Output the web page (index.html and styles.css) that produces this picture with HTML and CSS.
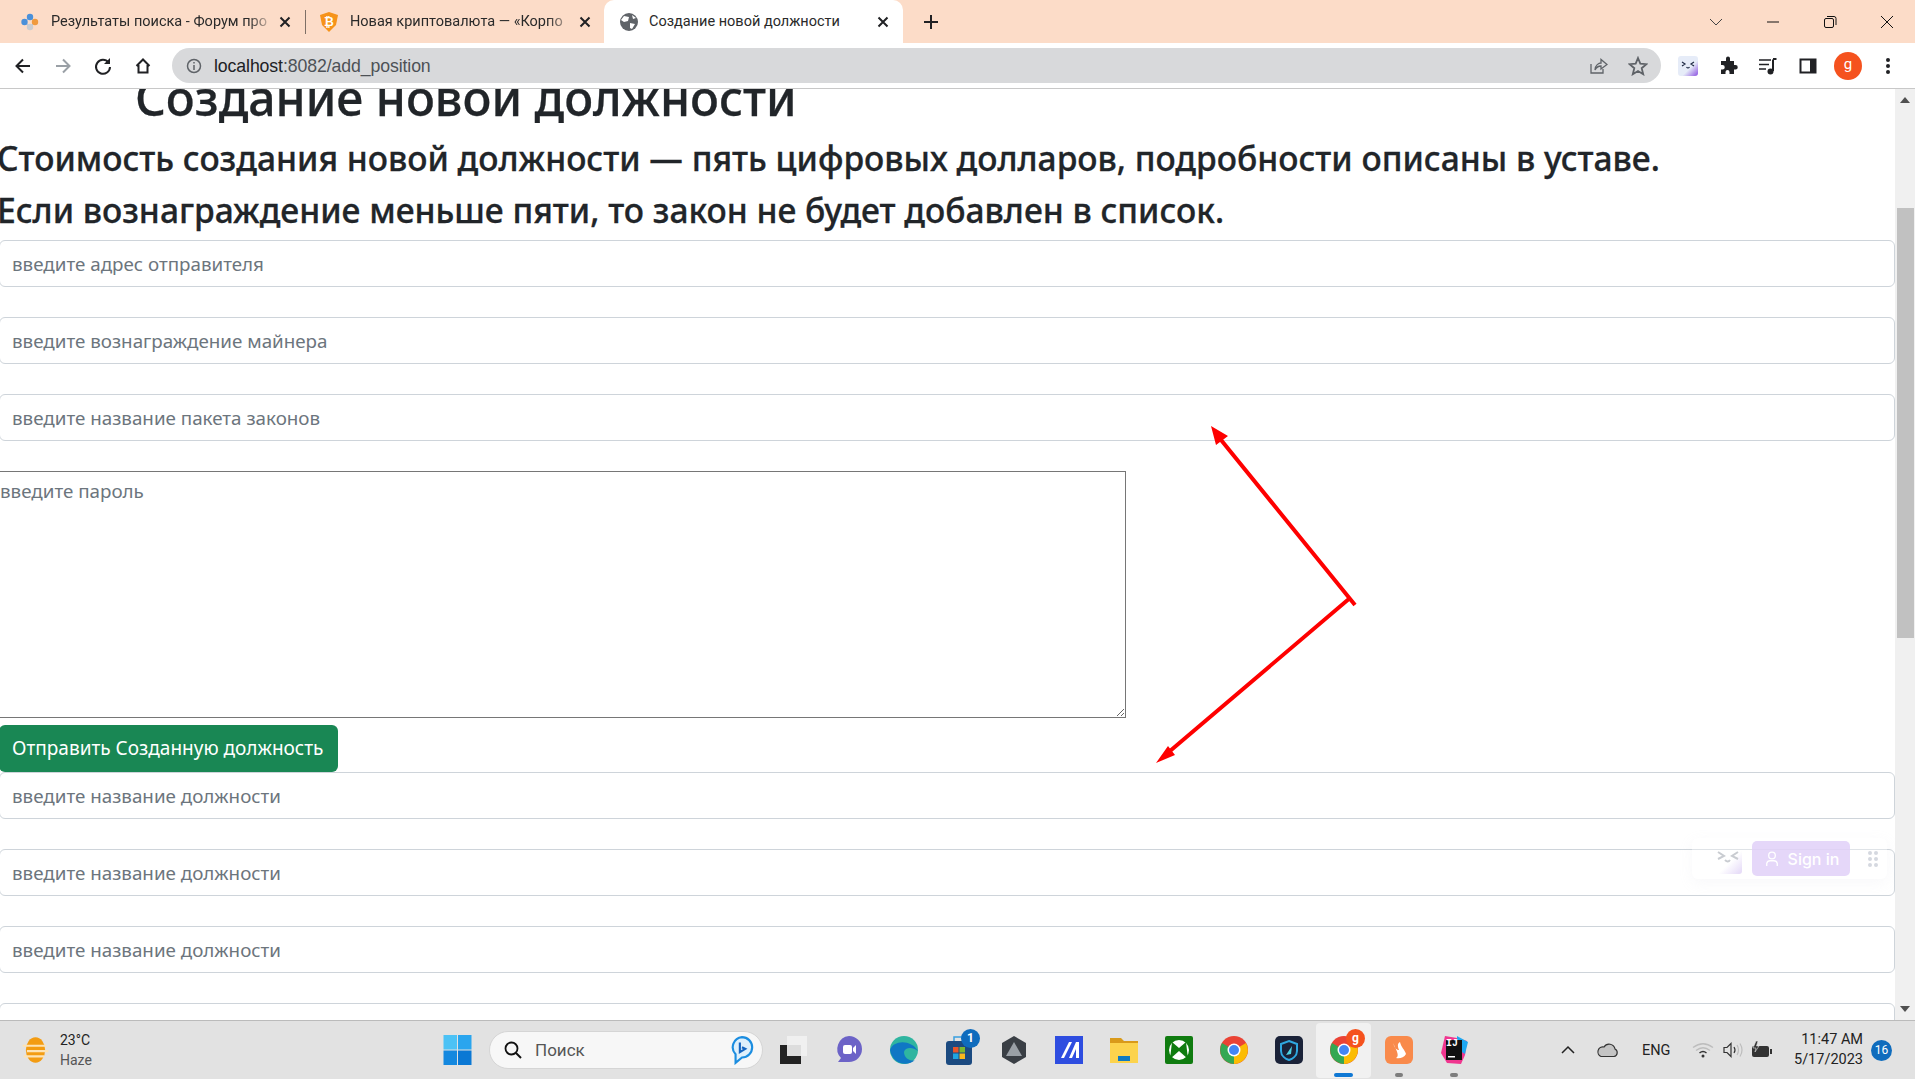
FILE: index.html
```html
<!DOCTYPE html>
<html lang="ru">
<head>
<meta charset="utf-8">
<title>Создание новой должности</title>
<link rel="stylesheet" href="styles.css">
</head>
<body>
<div class="win">
  <div class="tabbar">
    <div class="tab t1">
      <svg class="fav" viewBox="0 0 20 20"><path d="M10 5L4.500 10L10 15L15 10Z" fill="none" stroke="#9cc3ea" stroke-width="1"/><circle cx="10" cy="5" r="3.200" fill="#4a90d9"/><circle cx="4.500" cy="10" r="3.200" fill="#4a90d9"/><circle cx="15" cy="10" r="3.200" fill="#f09a3e"/><circle cx="10" cy="15" r="3.200" fill="#c9ccd1"/></svg>
      <span class="tt">Результаты поиска - Форум про</span><svg class="x" viewBox="0 0 12 12"><path d="M1.500 1.500L10.500 10.500M10.500 1.500L1.500 10.500" stroke="#202124" stroke-width="2"/></svg>
    </div>
    <div class="sep"></div>
    <div class="tab t2">
      <svg class="fav" viewBox="0 0 20 20"><path d="M10 0 L19 3 L17 13 L10 20 L3 13 L1 3Z" fill="#f6931a"/><text x="10" y="14" class="btc">₿</text></svg>
      <span class="tt">Новая криптовалюта — «Корпо</span><svg class="x" viewBox="0 0 12 12"><path d="M1.500 1.500L10.500 10.500M10.500 1.500L1.500 10.500" stroke="#202124" stroke-width="2"/></svg>
    </div>
    <div class="tab active">
      <svg class="fav" viewBox="0 0 20 20"><circle cx="10" cy="10" r="9" fill="#5f6368"/><path d="M5 4 L10 5 L9 9 L5 10 L2 8Z M11 11 L16 12 L13 17 L11 16Z M13 3 L17 6 L14 7Z" fill="#fff"/></svg>
      <span class="tt">Создание новой должности</span><svg class="x" viewBox="0 0 12 12"><path d="M1.500 1.500L10.500 10.500M10.500 1.500L1.500 10.500" stroke="#202124" stroke-width="2"/></svg>
    </div>
    <svg class="plus" viewBox="0 0 14 14"><path d="M7 0V14M0 7H14" stroke="#202124" stroke-width="2"/></svg>
    <div class="winctl">
      <svg viewBox="0 0 16 16" class="wc"><path d="M2 5L8 11L14 5" fill="none" stroke="#444" stroke-width="1"/></svg>
      <svg viewBox="0 0 16 16" class="wc"><path d="M2 8H14" stroke="#111" stroke-width="1"/></svg>
      <svg viewBox="0 0 16 16" class="wc"><rect x="2.500" y="4.500" width="9" height="9" rx="1.500" fill="none" stroke="#111"/><path d="M5 2.500H12A2 2 0 0 1 14 4.500V11" fill="none" stroke="#111"/></svg>
      <svg viewBox="0 0 16 16" class="wc"><path d="M2 2L14 14M14 2L2 14" stroke="#111" stroke-width="1"/></svg>
    </div>
  </div>
  <div class="toolbar">
    <div class="navs">
      <svg viewBox="0 0 20 20" class="nav"><path d="M17 10H4M10 3.500L3.500 10L10 16.500" fill="none" stroke="#202124" stroke-width="2"/></svg>
      <svg viewBox="0 0 20 20" class="nav"><path d="M3 10H16M10 3.500L16.500 10L10 16.500" fill="none" stroke="#9aa0a6" stroke-width="2"/></svg>
      <svg viewBox="0 0 20 20" class="nav"><path d="M15.500 6.500A7 7 0 1 0 17 11" fill="none" stroke="#202124" stroke-width="2"/><path d="M17 2V8H11Z" fill="#202124"/></svg>
      <svg viewBox="0 0 20 20" class="nav"><path d="M3.500 10L10 3.500L16.500 10M5.500 9V16.500H14.500V9" fill="none" stroke="#202124" stroke-width="2"/></svg>
    </div>
    <div class="omni">
      <svg viewBox="0 0 16 16" class="info"><circle cx="8" cy="8" r="6.500" fill="none" stroke="#5f6368" stroke-width="1.500"/><path d="M8 7V12M8 4V5.500" stroke="#5f6368" stroke-width="1.500"/></svg>
      <span class="url">localhost</span><span class="url dim">:8082/add_position</span>
      <span class="spring"></span>
      <svg viewBox="0 0 20 20" class="oi"><path d="M3 8V17H15V13" fill="none" stroke="#5f6368" stroke-width="1.300"/><path d="M7 14C7 9 11 7 13 7V3.500L19 8.500L13 13V10C10 10 8.500 11 7 14Z" fill="none" stroke="#5f6368" stroke-width="1.300"/></svg>
      <svg viewBox="0 0 20 20" class="oi star"><path d="M10 2L12.300 7.700L18.500 8.200L13.700 12.200L15.200 18.200L10 15L4.800 18.200L6.300 12.200L1.500 8.200L7.700 7.700Z" fill="none" stroke="#5f6368" stroke-width="1.800"/></svg>
    </div>
    <div class="exts">
      <span class="extmon"><svg viewBox="0 0 20 20"><path d="M4 6L7 8L4 10M16 6L13 8L16 10M8.500 11Q10 13 11.500 11" fill="none" stroke="#1f2a44" stroke-width="1.200"/></svg></span>
      <svg viewBox="0 0 20 20" class="ext"><path d="M8 2.500A2 2 0 0 1 12 2.500V5H16V9H17.500A2.200 2.200 0 0 1 17.500 13.500H16V18H11.500V16A2 2 0 0 0 7.500 16V18H3V13.500H4.500A2.200 2.200 0 0 0 4.500 9H3V5H8Z" fill="#202124"/></svg>
      <svg viewBox="0 0 20 20" class="ext"><path d="M1 4H13M1 8.500H11M1 13H8" stroke="#202124" stroke-width="1.600"/><path d="M15 3.500V15" stroke="#202124" stroke-width="2"/><path d="M15 3H18.500" stroke="#202124" stroke-width="2"/><circle cx="12.500" cy="15.500" r="3" fill="#202124"/></svg>
      <svg viewBox="0 0 20 20" class="ext"><path d="M1.500 2.500H18.500V17.500H1.500Z" fill="#202124"/><rect x="3.500" y="4.500" width="8.500" height="11" fill="#fff"/></svg>
      <span class="avatar">g</span>
      <svg viewBox="0 0 20 20" class="ext"><circle cx="10" cy="4" r="2" fill="#202124"/><circle cx="10" cy="10" r="2" fill="#202124"/><circle cx="10" cy="16" r="2" fill="#202124"/></svg>
    </div>
  </div>
  <div class="viewport">
    <main class="page">
      <h1 class="title">Создание новой должности</h1>
      <h4 class="lead">Стоимость создания новой должности — пять цифровых долларов, подробности описаны в уставе.</h4>
      <h4 class="lead">Если вознаграждение меньше пяти, то закон не будет добавлен в список.</h4>
      <div class="form">
        <input class="field" placeholder="введите адрес отправителя">
        <input class="field" placeholder="введите вознаграждение майнера">
        <input class="field" placeholder="введите название пакета законов">
        <textarea class="area" placeholder="введите пароль"></textarea>
        <button class="send">Отправить Созданную должность</button>
        <input class="field" placeholder="введите название должности">
        <input class="field" placeholder="введите название должности">
        <input class="field" placeholder="введите название должности">
        <input class="field" placeholder="введите название должности">
      </div>
      <svg class="arrows" viewBox="0 0 300 380">
        <path d="M255 205L117 35M250 198L70 351" fill="none" stroke="#fe0000" stroke-width="4"/>
        <path d="M111 26L128 36L116 45Z M56 363L68 346L75 355Z" fill="#fe0000"/>
      </svg>
      <div class="floatbar">
        <span class="fb-mon"><svg viewBox="0 0 30 30"><path d="M6 8L12 12L6 15M26 8L20 12L26 15M13 16Q16 19 18 16" fill="none" stroke="#c9ccd1" stroke-width="2"/></svg></span>
        <span class="signin"><svg viewBox="0 0 16 20"><circle cx="8" cy="6" r="3.800" fill="none" stroke="#fff" stroke-width="1.500"/><path d="M2 18V15A4 4 0 0 1 6 12H10A4 4 0 0 1 14 15V18" fill="none" stroke="#fff" stroke-width="1.500"/></svg>Sign in</span>
        <svg class="grip" viewBox="0 0 12 18"><g fill="#d5d8e0"><circle cx="3" cy="3" r="2"/><circle cx="9" cy="3" r="2"/><circle cx="3" cy="9" r="2"/><circle cx="9" cy="9" r="2"/><circle cx="3" cy="15" r="2"/><circle cx="9" cy="15" r="2"/></g></svg>
      </div>
    </main>
    <div class="scroll">
      <svg class="sarrow" viewBox="0 0 10 6"><path d="M0 6L5 0L10 6Z" fill="#505050"/></svg>
      <div class="thumb"></div>
      <span class="spring"></span>
      <svg class="sarrow" viewBox="0 0 10 6"><path d="M0 0L5 6L10 0Z" fill="#505050"/></svg>
    </div>
  </div>
  <div class="taskbar">
    <div class="weather">
      <svg viewBox="0 0 24 28" class="wicon"><ellipse cx="12" cy="14" rx="9" ry="12" fill="#f39c12"/><path d="M0 10H22M4 15H24M1 20H20" stroke="#fde3b5" stroke-width="2"/></svg>
      <div class="wtext"><span>23°C</span><span class="haze">Haze</span></div>
    </div>
    <div class="center">
      <svg viewBox="0 0 28 30" class="start"><rect x="0" y="0" width="13.500" height="14.500" fill="#4cc2f5"/><rect x="14.500" y="0" width="13.500" height="14.500" fill="#2aa5ee"/><rect x="0" y="15.500" width="13.500" height="14.500" fill="#1488df"/><rect x="14.500" y="15.500" width="13.500" height="14.500" fill="#0b78d4"/></svg>
      <div class="search">
        <svg viewBox="0 0 20 20" class="sglass"><circle cx="8.500" cy="8.500" r="6" fill="none" stroke="#111" stroke-width="1.800"/><path d="M13 13L18 18" stroke="#111" stroke-width="2"/></svg>
        <span class="stext">Поиск</span>
        <svg viewBox="0 0 22 28" class="bing"><path d="M11 2A9.500 9.500 0 0 1 11 21L5 26V18A9.500 9.500 0 0 1 11 2Z" fill="#dff0fb" stroke="#1b8de0" stroke-width="2"/><path d="M9 7V16L14 13L11 11.500" fill="none" stroke="#1565c0" stroke-width="2"/></svg>
      </div>
      <div class="apps">
        <span class="app"><svg viewBox="0 0 30 30"><rect x="1" y="10" width="21" height="19" fill="#222"/><rect x="8" y="1" width="20" height="20" fill="#f2f2f2" opacity=".9"/></svg></span>
        <span class="app"><svg viewBox="0 0 30 30"><path d="M15 1A13 13 0 0 1 15 27H4L7 23A13 13 0 0 1 15 1Z" fill="#6c63c7"/><rect x="9" y="10" width="9" height="9" rx="2" fill="#fff"/><path d="M19 13L22 10V19L19 16Z" fill="#fff"/></svg></span>
        <span class="app"><svg viewBox="0 0 30 30"><circle cx="15" cy="15" r="14" fill="#2fb5a0"/><path d="M1 15C4 5 22 4 29 16C24 12 16 12 15 17C15 24 23 27 26 25C20 31 4 31 1 15Z" fill="#0f77c4"/></svg></span>
        <span class="app"><svg viewBox="0 0 30 30"><path d="M10 6V2H20V6" fill="none" stroke="#3aa0e0" stroke-width="1.500"/><rect x="2" y="6" width="26" height="24" rx="3" fill="#1b4a80"/><rect x="9" y="12" width="5.500" height="5.500" fill="#e8562a"/><rect x="15.500" y="12" width="5.500" height="5.500" fill="#7cb82f"/><rect x="9" y="18.500" width="5.500" height="5.500" fill="#1fa5e0"/><rect x="15.500" y="18.500" width="5.500" height="5.500" fill="#f8b81e"/></svg><b class="badge blue">1</b></span>
        <span class="app"><svg viewBox="0 0 30 30"><path d="M15 1L27 8V22L15 29L3 22V8Z" fill="#3a3f45"/><path d="M15 7L23 21H7Z" fill="#9aa0a6"/></svg></span>
        <span class="app"><svg viewBox="0 0 30 30"><rect x="1" y="1" width="28" height="28" fill="#2e4de0"/><path d="M7 23L15 7H18L10 23ZM15 23L22 7H25V23H22V14L18 23Z" fill="#fff"/></svg></span>
        <span class="app"><svg viewBox="0 0 30 30"><path d="M1 3H12L15 6H29V28H1Z" fill="#d99a1a"/><rect x="1" y="8" width="28" height="20" fill="#fcd34d"/><rect x="9" y="21" width="12" height="5" fill="#0f7ac2"/></svg></span>
        <span class="app"><svg viewBox="0 0 30 30"><rect x="1" y="1" width="28" height="28" rx="2" fill="#107c10"/><circle cx="15" cy="15" r="10" fill="#fff"/><path d="M8 7L15 13L22 7L24 24L15 16L6 24Z" fill="#107c10"/></svg></span>
        <span class="app"><svg viewBox="0 0 30 30"><circle cx="15" cy="15" r="14" fill="#ea4335"/><path d="M15 15L27 8A14 14 0 0 1 15 29Z" fill="#fbbc04"/><path d="M15 15L15 29A14 14 0 0 1 3 8Z" fill="#34a853"/><circle cx="15" cy="15" r="6.500" fill="#fff"/><circle cx="15" cy="15" r="5" fill="#4285f4"/></svg></span>
        <span class="app"><svg viewBox="0 0 30 30"><rect x="1" y="1" width="28" height="28" rx="5" fill="#1a2238"/><path d="M15 6L23 9V16C23 21 18 24 15 25C12 24 7 21 7 16V9Z" fill="none" stroke="#2fa8e0" stroke-width="2"/><path d="M12 20L18 11L17 19Z" fill="#4fd1e0"/></svg></span>
        <span class="app on"><svg viewBox="0 0 30 30"><circle cx="15" cy="15" r="14" fill="#ea4335"/><path d="M15 15L27 8A14 14 0 0 1 15 29Z" fill="#fbbc04"/><path d="M15 15L15 29A14 14 0 0 1 3 8Z" fill="#34a853"/><circle cx="15" cy="15" r="6.500" fill="#fff"/><circle cx="15" cy="15" r="5" fill="#4285f4"/></svg><b class="badge orange">g</b><i class="run long"></i></span>
        <span class="app"><svg viewBox="0 0 30 30"><rect x="1" y="1" width="28" height="28" rx="6" fill="#f98a4b"/><path d="M9 8C11 14 13 15 15 15C13 10 14 8 16 7C17 12 21 15 22 19C20 23 15 24 12 23C15 21 14 18 9 8Z" fill="#fff"/></svg><i class="run"></i></span>
        <span class="app"><svg viewBox="0 0 30 30"><path d="M6 1L18 3L28 6L26 20L22 29L8 28L2 18Z" fill="#f0368f"/><path d="M18 1L29 7L26 19L18 14Z" fill="#1ea7f0"/><rect x="7" y="5" width="16" height="20" fill="#111"/><rect x="9" y="21" width="7" height="1.500" fill="#fff"/></svg><b class="ij">IJ</b><i class="run"></i></span>
      </div>
    </div>
    <div class="tray">
      <svg viewBox="0 0 16 10" class="tr caret"><path d="M2 8L8 2L14 8" fill="none" stroke="#222" stroke-width="1.500"/></svg>
      <svg viewBox="0 0 24 16" class="tr cloud"><path d="M6 14.500H19A4 4 0 0 0 20 7A6 6 0 0 0 9 5A5 5 0 0 0 6 14.500Z" fill="#c4c4c4" stroke="#333" stroke-width="1.200"/></svg>
      <span class="eng">ENG</span>
      <svg viewBox="0 0 22 16" class="tr wifi"><path d="M1 5.500Q11 -2 21 5.500M4 8.500Q11 3 18 8.500" fill="none" stroke="#bdbdbd" stroke-width="1.300"/><path d="M7.500 11Q11 8 14.500 11" fill="none" stroke="#333" stroke-width="1.400"/><circle cx="11" cy="14" r="1.500" fill="#333"/></svg>
      <svg viewBox="0 0 22 16" class="tr vol"><path d="M1 5.500H4L8 1.500V14.500L4 10.500H1Z" fill="none" stroke="#333" stroke-width="1.200"/><path d="M11 5Q13 8 11 11" fill="none" stroke="#333" stroke-width="1.200"/><path d="M14 3Q17 8 14 13M17 1.500Q21 8 17 14.500" fill="none" stroke="#bdbdbd" stroke-width="1.200"/></svg>
      <svg viewBox="0 0 22 18" class="tr batt"><rect x="1" y="5" width="17" height="11" rx="2" fill="#333"/><rect x="19" y="8" width="2" height="5" fill="#333"/><path d="M5 0L2 7H5L4 11L8 5H5.500L7 0Z" fill="#333" stroke="#e2e2e2" stroke-width=".6"/></svg>
      <div class="clock"><span>11:47 AM</span><span>5/17/2023</span></div>
      <span class="notif">16</span>
    </div>
  </div>
</div>
</body>
</html>
```
FILE: styles.css
```css
* { box-sizing: border-box; }
html, body { margin: 0; padding: 0; width: 1915px; height: 1079px; overflow: hidden; background: #fff; }
body { font-family: "Open Sans", "Noto Sans", sans-serif; color: #212529; }
.win { display: flex; flex-direction: column; width: 1915px; height: 1079px; }

.tabbar { height: 43px; flex: none; display: flex; align-items: center; background: #fcdcc8; padding-left: 8px; font-family: "Roboto", sans-serif; color: #2a2a2a; }
.tab { display: flex; align-items: center; height: 43px; flex: none; position: relative; }
.t1 { width: 297px; padding: 0 14px 0 12px; }
.t2 { width: 294px; padding: 0 9px 0 13px; }
.sep { width: 1px; height: 24px; background: #7d6f66; flex: none; }
.active { width: 299px; background: #fff; border-radius: 10px 10px 0 0; padding: 0 14px 0 15px; margin-left: 4px; }
.fav { width: 20px; height: 20px; flex: none; margin-right: 11px; }
.active .fav { margin-right: 10px; }
.btc { font-family: "DejaVu Sans", sans-serif; font-size: 12px; fill: #fff; text-anchor: middle; font-weight: 700; }
.tt { flex: 1; overflow: hidden; white-space: nowrap; font-size: 14.500px; -webkit-mask-image: linear-gradient(90deg, #000 88%, transparent); mask-image: linear-gradient(90deg, #000 88%, transparent); }
.active .tt { -webkit-mask-image: none; mask-image: none; }
.x { width: 12px; height: 12px; margin-left: 4px; flex: none; }
.plus { width: 14px; height: 14px; margin-left: 21px; flex: none; }
.winctl { margin-left: auto; display: flex; gap: 41px; padding-right: 20px; align-items: center; }
.wc { width: 16px; height: 16px; display: block; }

.toolbar { height: 46px; flex: none; display: flex; align-items: center; background: #fff; border-bottom: 1px solid #c8c8c8; }
.navs { display: flex; width: 172px; padding-left: 13px; gap: 20px; flex: none; }
.nav { width: 20px; height: 20px; flex: none; }
.omni { width: 1489px; height: 35px; background: #d8d9db; border-radius: 18px; display: flex; align-items: center; padding: 0 13px 0 14px; flex: none; }
.info { width: 16px; height: 16px; flex: none; margin-right: 12px; }
.url { color: #202124; font-family: "Liberation Sans", sans-serif; font-size: 17.700px; letter-spacing: -.1px; padding-top: 1px; white-space: nowrap; }
.url.dim { color: #4d5156; }
.spring { flex: 1; }
.oi { width: 20px; height: 20px; flex: none; }
.star { margin-left: 20px; }
.exts { display: flex; align-items: center; flex: none; margin-left: 17px; gap: 20px; }
.extmon { width: 20px; height: 20px; background: linear-gradient(135deg, #e6ecf8 60%, #8a4fe0); border-radius: 3px; display: block; }
.extmon svg { display: block; }
.ext { width: 20px; height: 20px; flex: none; }
.avatar { width: 28px; height: 28px; margin: 0 -4px; border-radius: 50%; background: #f5521e; color: #fff; display: flex; align-items: center; justify-content: center; font-family: "Roboto", sans-serif; font-size: 15px; padding-bottom: 3px; }

.viewport { flex: 1; display: flex; min-height: 0; }
.page { flex: 1; position: relative; overflow: hidden; }
.title { margin: -20px 0 0 135px; font-size: 48.100px; line-height: 57px; font-weight: 500; white-space: nowrap; font-family: "Noto Sans", sans-serif; -webkit-text-stroke: .3px #212529; }
.lead { margin: 0 0 0 -3px; font-size: 33.600px; line-height: 43px; height: 52px; padding-top: 11px; font-weight: 500; white-space: nowrap; -webkit-text-stroke: .3px #212529; font-family: "Noto Sans", sans-serif; }
.form { display: flex; flex-direction: column; margin-left: -1px; width: 1896px; margin-top: 10px; }
.field { display: block; width: 100%; height: 47px; margin-bottom: 30px; border: 1px solid #ced4da; border-radius: 6px; padding: 1px 12px 0; font: 18.800px/1.500 "Noto Sans", sans-serif; background: #fff; flex: none; }
.field::placeholder, .area::placeholder { color: #6c757d; opacity: 1; }
.area { display: block; width: 1127px; height: 247px; border: 1px solid #767676; border-radius: 0; padding: 5px 0 0; margin: 0 0 7px; font: 18.800px/1.500 "Noto Sans", sans-serif; background: #fff; resize: both; flex: none; outline: 0; }
.send { display: block; width: 339px; height: 47px; flex: none; background: #198754; color: #fff; border: 0; border-radius: 6px; font: 19px/1.500 "Noto Sans", sans-serif; padding: 0 0 0 13px; text-align: left; white-space: nowrap; }
.arrows { position: absolute; left: 1100px; top: 311px; width: 300px; height: 380px; }
.floatbar { position: absolute; left: 1692px; top: 749px; width: 195px; height: 41px; background: rgba(255,255,255,.35); display: flex; align-items: center; border-radius: 6px; box-shadow: 0 4px 14px rgba(200,200,210,.12); padding-left: 20px; }
.fb-mon { width: 30px; height: 30px; background: linear-gradient(135deg, rgba(255,255,255,0) 60%, rgba(220,205,245,.8)); border-radius: 3px; display: block; flex: none; }
.fb-mon svg { display: block; width: 30px; height: 30px; }
.signin { margin-left: 10px; width: 98px; height: 35px; padding-left: 2px; background: rgba(222,205,248,.8); border-radius: 5px; color: #fff; font: 500 16px "Inter", sans-serif; display: flex; align-items: center; justify-content: center; gap: 9px; flex: none; }
.signin svg { width: 14px; height: 18px; flex: none; }
.grip { width: 12px; height: 18px; margin-left: 17px; flex: none; }
.scroll { width: 20px; flex: none; background: #f0f0f0; display: flex; flex-direction: column; align-items: center; padding: 8px 0; }
.sarrow { width: 10px; height: 6px; flex: none; }
.thumb { width: 17px; height: 430px; background: #c1c1c1; margin: 105px 0 0 1px; flex: none; }

.taskbar { height: 59px; flex: none; display: flex; align-items: center; background: #e2e2e2; border-top: 1px solid #bbb; position: relative; font-family: "Roboto", sans-serif; color: #222; }
.weather { display: flex; align-items: center; width: 443px; padding-left: 21px; flex: none; }
.wicon { width: 29px; height: 30px; flex: none; }
.wtext { display: flex; flex-direction: column; font-size: 14px; line-height: 20px; margin-left: 10px; }
.haze { color: #555; }
.center { display: flex; align-items: center; flex: none; }
.start { width: 29px; height: 30px; flex: none; }
.search { display: flex; align-items: center; width: 274px; height: 38px; background: #f7f7f7; border-radius: 19px; margin-left: 17px; padding: 0 8px 0 13px; border: 1px solid #d5d5d5; flex: none; }
.sglass { width: 20px; height: 20px; flex: none; }
.stext { margin-left: 12px; font-size: 17px; color: #555; flex: 1; }
.bing { width: 24px; height: 30px; flex: none; }
.apps { display: flex; align-items: center; margin-left: 3px; }
.app { width: 55px; height: 55px; display: flex; align-items: center; justify-content: center; position: relative; flex: none; border-radius: 4px; }
.app svg { width: 30px; height: 30px; }
.on { background: #f1f1f1; }
.badge { position: absolute; width: 19px; height: 19px; left: 30px; top: 6px; border-radius: 50%; color: #fff; font: 700 12px/19px "Roboto", sans-serif; text-align: center; }
.blue { background: #0f6cbd; }
.orange { background: #f5521e; }
.ij { position: absolute; left: 20px; top: 15px; font: 700 10px/12px "Liberation Mono", monospace; color: #fff; }
.run { position: absolute; left: 24px; bottom: 1px; width: 8px; height: 4px; border-radius: 2px; background: #7d7d7d; }
.run.long { left: 18px; width: 19px; background: #0f78d4; }
.tray { position: absolute; left: 1558px; top: 0; bottom: 0; display: flex; align-items: center; }
.tr { flex: none; display: block; }
.caret { width: 16px; height: 10px; margin-left: 2px; }
.cloud { width: 24px; height: 16px; margin-left: 19px; }
.eng { font-size: 14.500px; margin-left: 23px; width: 40px; }
.wifi { width: 22px; height: 16px; margin-left: 10px; }
.vol { width: 22px; height: 16px; margin-left: 9px; }
.batt { width: 22px; height: 18px; margin-left: 6px; }
.clock { display: flex; flex-direction: column; align-items: flex-end; font-size: 14.500px; line-height: 20px; width: 90px; }
.notif { width: 21px; height: 21px; border-radius: 50%; background: #0f6cbd; color: #fff; font-size: 12px; display: flex; align-items: center; justify-content: center; margin-left: 8px; }
```
